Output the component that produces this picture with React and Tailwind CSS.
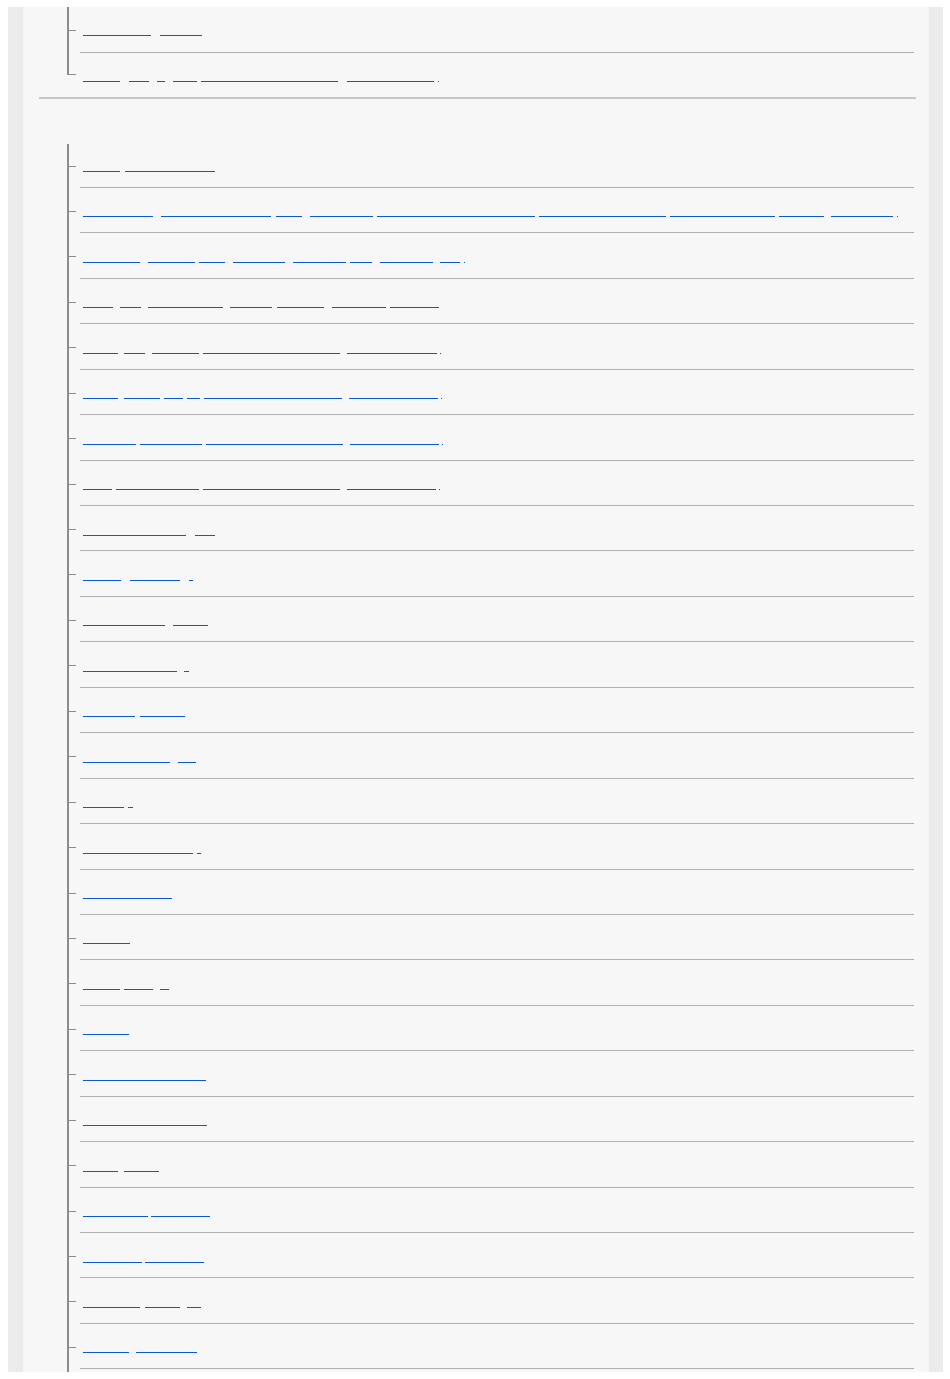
import React from "react";

const LINE = "bg-[#8c8c8c]";

const SECTION1 = [
  { segs: [[83, 151], [160, 202]], tickCls: "h-[23px]", rowCls: "h-[46px] border-b border-[#b0b0b0]" },
  {
    segs: [[83, 120], [129, 149], [157, 165], [173, 197], [201, 338], [347, 434], [438, 439]],
    tickCls: "h-[21px]",
    rowCls: "h-[44px]",
    last: true,
  },
];

const SECTION2_SEGS = [
  [[83, 120], [125, 215]],
  [[83, 153], [161, 271], [276, 302], [310, 373], [377, 535], [539, 666], [670, 775], [779, 824], [831, 893], [897, 898]],
  [[83, 140], [148, 195], [199, 225], [233, 285], [293, 346], [350, 372], [380, 433], [440, 460], [464, 465]],
  [[83, 113], [120, 141], [148, 223], [230, 272], [277, 324], [332, 386], [390, 439]],
  [[83, 118], [124, 145], [152, 199], [203, 340], [347, 437], [440, 441]],
  [[83, 118], [124, 160], [164, 183], [187, 200], [204, 342], [349, 438], [441, 442]],
  [[83, 136], [140, 202], [206, 343], [350, 439], [442, 443]],
  [[83, 112], [116, 199], [203, 340], [347, 436], [439, 440]],
  [[83, 186], [195, 215]],
  [[83, 121], [130, 180], [189, 193]],
  [[83, 165], [173, 208]],
  [[83, 177], [184, 189]],
  [[83, 135], [140, 185]],
  [[83, 170], [178, 196]],
  [[83, 124], [128, 133]],
  [[83, 193], [197, 201]],
  [[83, 172]],
  [[83, 130]],
  [[83, 120], [124, 153], [160, 169]],
  [[83, 129]],
  [[83, 206]],
  [[83, 207]],
  [[83, 118], [124, 159]],
  [[83, 148], [151, 210]],
  [[83, 142], [145, 204]],
  [[83, 140], [145, 180], [187, 201]],
  [[83, 129], [136, 197]],
  [[83, 160], [166, 210]],
];

function Underlines({ segs, topCls }) {
  let prev = 83;
  return (
    <a href="#" className={`flex items-start ${topCls} pl-[3px]`} aria-label="link">
      {segs.map(([s, e], i) => {
        const ml = s - prev;
        prev = e;
        return (
          <span
            key={i}
            className="block h-px bg-[#0b58d3] shrink-0"
            style={{ marginLeft: ml, width: e - s }}
          />
        );
      })}
    </a>
  );
}

function Row({ segs, tickCls, rowCls, last, topCls = "pt-[28px]", firstOffset = false }) {
  return (
    <li className="flex">
      <div className="flex flex-col w-[9px] shrink-0">
        <div className={`w-[2px] ${LINE} ${tickCls} ${firstOffset ? "mt-[1.5px]" : ""}`} />
        <div className="flex h-px">
          <div className={`w-[2px] h-px ${LINE}`} />
          <div className={`w-[7px] h-px ${LINE}`} />
        </div>
        {!last && <div className={`w-[2px] flex-1 ${LINE}`} />}
      </div>
      <div className={`flex-1 ml-[4px] ${rowCls}`}>
        <Underlines segs={segs} topCls={topCls} />
      </div>
    </li>
  );
}

export default function App() {
  return (
    <div className="bg-white pt-[7px] min-h-[1379px]" style={{ fontFamily: '"Liberation Sans", Arial, sans-serif' }}>
      <div className="ml-[8px] w-[935px] h-[1365px] overflow-hidden bg-[#ebebeb]">
        <div className="ml-[15px] mr-[14px] h-full bg-[#f7f7f7]">
          <ul className="ml-[44px] mr-[15px]">
            {SECTION1.map((r, i) => (
              <Row key={i} {...r} />
            ))}
          </ul>
          <div className="ml-[16px] mr-[13px] h-[2px] bg-[#c6c6c6]" />
          <ul className="ml-[44px] mr-[15px] mt-[43.5px]">
            {SECTION2_SEGS.map((segs, i) => (
              <Row
                key={i}
                segs={segs}
                tickCls={i === 0 ? "h-[21.5px]" : "h-[23px]"}
                firstOffset={i === 0}
                rowCls="h-[45.45px] border-b border-[#b0b0b0]"
                topCls="pt-[28.5px]"
              />
            ))}
          </ul>
        </div>
      </div>
    </div>
  );
}
